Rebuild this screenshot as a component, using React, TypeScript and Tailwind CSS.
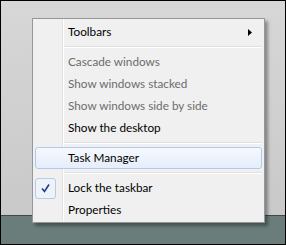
import type { ReactNode } from "react";

type Item =
  | { kind: "sep" }
  | { kind: "item"; label: string; disabled?: boolean; checked?: boolean; hot?: boolean; submenu?: boolean };

const items: Item[] = [
  { kind: "item", label: "Toolbars", submenu: true },
  { kind: "sep" },
  { kind: "item", label: "Cascade windows", disabled: true },
  { kind: "item", label: "Show windows stacked", disabled: true },
  { kind: "item", label: "Show windows side by side", disabled: true },
  { kind: "item", label: "Show the desktop" },
  { kind: "sep" },
  { kind: "item", label: "Task Manager", hot: true },
  { kind: "sep" },
  { kind: "item", label: "Lock the taskbar", checked: true },
  { kind: "item", label: "Properties" },
];

function Arrow() {
  return (
    <svg width="4" height="7" viewBox="0 0 4 7" className="mr-[9px]">
      <path d="M0 0 L4 3.5 L0 7 Z" fill="#000" />
    </svg>
  );
}

function Check() {
  return (
    <div className="w-[21px] h-[21px] -ml-px rounded-[3px] border border-[#b4cbe9] bg-[#eef3fa] flex items-center justify-center">
      <svg width="9" height="9" viewBox="0 0 9 9">
        <path d="M1 4.5 L3.5 7.5 L8 0.5" fill="none" stroke="#1d3c8f" strokeWidth="1.6" />
      </svg>
    </div>
  );
}

function Row({ children, hot }: { children: ReactNode; hot?: boolean }) {
  return (
    <div
      className={
        hot
          ? "h-[22px] flex items-center rounded-[3px] border border-[#aecbef] bg-[linear-gradient(to_bottom,#f5f8fd,#e6eefa)]"
          : "h-[22px] flex items-center border border-transparent"
      }
    >
      {children}
    </div>
  );
}

export default function App() {
  return (
    <div className="relative w-[286px] h-[245px] border border-black flex flex-col overflow-hidden font-['Lato',sans-serif]">
      <div className="flex-1 bg-[linear-gradient(to_bottom,#d7d7d7,#c9c9c9)]" />
      <div className="h-[29px] border-t border-[#3e4a49] bg-[#6a7d7b]" />

      {/* context menu sits over the desktop and taskbar */}
      <div className="absolute left-[31px] top-[17px] w-[233px] h-[205px] border border-[#979797] shadow-[3px_3px_3px_rgba(0,0,0,0.35)] px-[2px] pt-[2px] bg-[linear-gradient(to_right,#f0f0f0_29px,#e2e3e3_29px,#e2e3e3_30px,#ffffff_30px,#ffffff_31px,#f0f0f0_31px)]">
        {items.map((it, i) =>
          it.kind === "sep" ? (
            <div key={i} className="h-[8px] flex flex-col justify-center pl-[29px]">
              <div className="h-px bg-[#e0e0e0]" />
              <div className="h-px bg-white" />
            </div>
          ) : (
            <Row key={i} hot={it.hot}>
              <div className="w-[21px] h-full flex items-center">{it.checked && <Check />}</div>
              <span
                className={
                  "ml-[11px] flex-1 text-[11.75px] leading-none " + (it.disabled ? "text-[#6d6d6d]" : "text-black")
                }
              >
                {it.label}
              </span>
              {it.submenu && <Arrow />}
            </Row>
          )
        )}
      </div>
    </div>
  );
}
